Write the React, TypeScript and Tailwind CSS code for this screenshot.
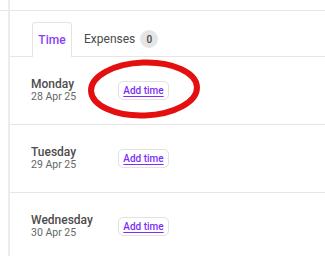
import React from "react";

const rows = [
  { day: "Monday", date: "28 Apr 25" },
  { day: "Tuesday", date: "29 Apr 25" },
  { day: "Wednesday", date: "30 Apr 25" },
];

export default function App() {
  return (
    <div className="relative flex w-[325px] h-[256px] overflow-hidden bg-white" style={{ fontFamily: "Roboto, Lato, sans-serif" }}>
      <div className="w-[8px] shrink-0">
        <div className="h-[11px] border-b border-[#e6e6e6]" />
      </div>
      <div className="flex-1 border-l-2 border-[#ececec] flex flex-col">
        <div className="h-[11px] shrink-0 border-b border-[#e6e6e6]" />
        <div className="h-[46px] shrink-0 pl-[22px] flex items-end border-b border-[#e6e6e6]">
          <div className="h-[35px] w-[40px] -mb-px flex items-center justify-center bg-white border border-b-0 border-[#e3e3e3] rounded-t-[4px] text-[12px] font-medium text-[#8b3ff6]">
            Time
          </div>
          <div className="h-[34px] ml-[12px] flex items-center gap-[5px]">
            <span className="text-[12px] text-[#4a4a4a]">Expenses</span>
            <span className="w-[18px] h-[18px] rounded-full bg-[#e5e5e5] flex items-center justify-center text-[10px] font-medium text-[#444]">0</span>
          </div>
        </div>
        {rows.map((r, i) => (
          <div key={i} className="h-[68px] shrink-0 flex items-center pl-[21px] border-b border-[#e6e6e6]">
            <div className="w-[87px] flex flex-col leading-none">
              <span className="text-[12px] font-medium text-[#4d4d4d]">{r.day}</span>
              <span className="text-[10.5px] text-[#666] mt-[2px]">{r.date}</span>
            </div>
            <button className="h-[19px] w-[51px] rounded-[5px] border border-[#e2e2e2] bg-white flex items-center justify-center text-[10px] font-medium text-[#7b2ff7] underline underline-offset-2">
              Add time
            </button>
          </div>
        ))}
      </div>
      <svg className="absolute left-0 top-0 pointer-events-none" width="325" height="256">
        <ellipse cx="144" cy="89" rx="53" ry="26.5" fill="none" stroke="#e3100f" strokeWidth="6" transform="rotate(-2 144 89)" />
      </svg>
    </div>
  );
}
